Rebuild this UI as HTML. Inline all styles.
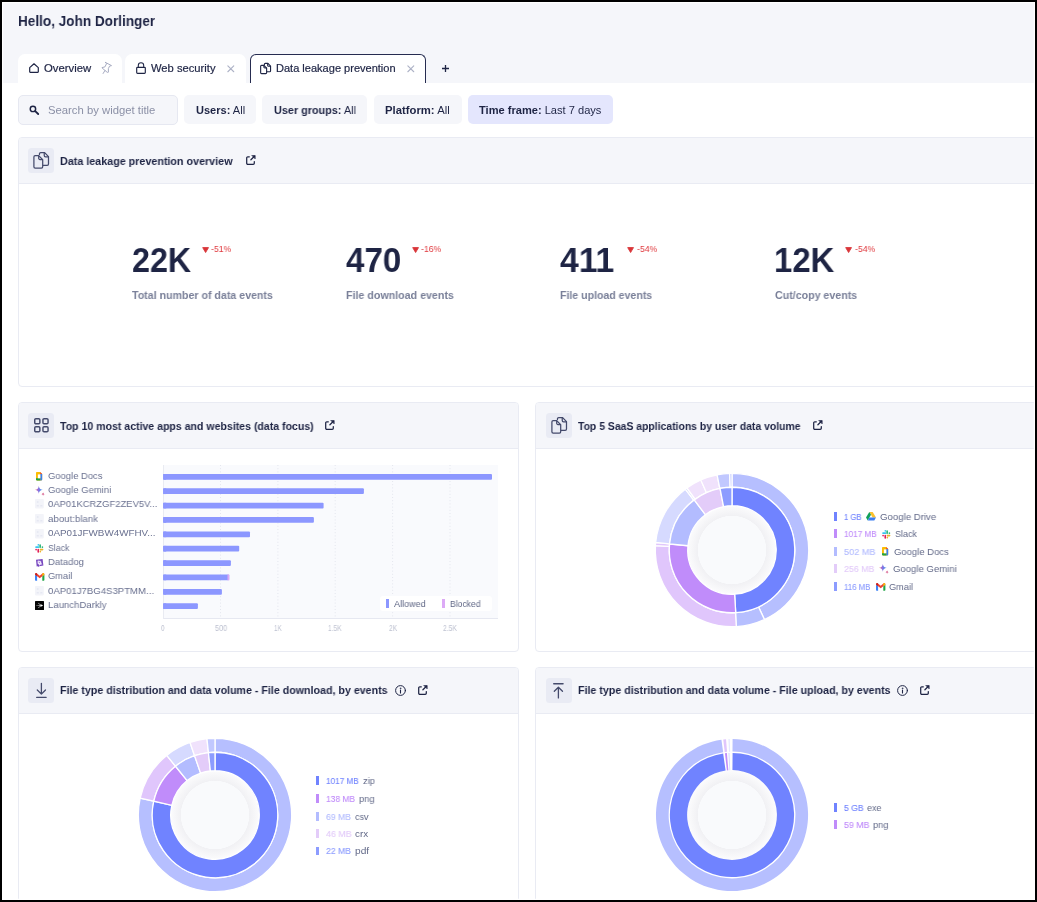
<!DOCTYPE html>
<html><head>
<meta charset="utf-8">
<title>Dashboard</title>
<style>
*{box-sizing:border-box;margin:0;padding:0}
html,body{width:1037px;height:902px;overflow:hidden;background:#fff}
body{font-family:"Liberation Sans",sans-serif;color:#1e2444;position:relative}
.abs{position:absolute}
.t{display:inline-block;will-change:transform;transform-origin:0 50%;white-space:nowrap}
svg{position:absolute;overflow:visible}
#frame{position:absolute;left:0;top:0;width:1037px;height:902px;border:2px solid #000;box-shadow:inset 0 0 0 1.2px #fff;z-index:50;pointer-events:none}
#topbg{left:0;top:0;width:1037px;height:83px;background:#f5f6fa}
#hello{left:18.4px;top:11.3px;font-size:15px;font-weight:bold;line-height:20px;color:#1e2444;white-space:nowrap}
.tab{top:54px;height:29px;background:#fff;border-radius:7px 7px 0 0;font-size:11px;line-height:29px;white-space:nowrap;color:#1e2444}
.tab span{position:absolute;top:0}
.tab .t{-webkit-text-stroke:0.2px #1e2444}
.tab svg{position:absolute}
#tab3{border:1px solid #262c50;border-bottom:none;border-radius:6px 6px 0 0}
.flt{top:95px;height:29px;background:#f5f6fa;border-radius:5px;font-size:11px;line-height:29px;white-space:nowrap;color:#1e2444;text-align:center}
.flt b{font-weight:bold}
.card{border:1px solid #e9ebf3;border-radius:4px;background:#fff;overflow:hidden}
.chead{position:absolute;left:0;top:0;right:0;height:46px;background:#f5f6fa;border-bottom:1px solid #e9ebf3}
.cico{position:absolute;left:9.2px;top:10px;width:25.8px;height:25.3px;border-radius:3.5px;background:#e9ebf4}
.ctitle{position:absolute;left:41px;top:14.4px;font-size:11px;font-weight:bold;line-height:18px;white-space:nowrap;color:#1e2444}
.big{font-size:34.4px;font-weight:bold;line-height:40px;color:#1e2444;white-space:nowrap}
.sub{font-size:11px;font-weight:bold;line-height:16px;color:#7a8099;white-space:nowrap}
.delta{font-size:9.5px;line-height:10px;color:#e0393e;white-space:nowrap}
.blab{font-size:9.8px;line-height:14px;color:#6a7190;white-space:nowrap}
.axl{font-size:8.4px;line-height:10px;color:#bec2d1;white-space:nowrap}
.leg{font-size:9.3px;line-height:12px;color:#5f6685;white-space:nowrap}
.lval{font-size:9.4px;line-height:14px;-webkit-text-stroke:0.12px;white-space:nowrap}
.lnam{font-size:9.8px;line-height:14px;color:#626988;white-space:nowrap}
</style>
</head>
<body>
<div id="topbg" class="abs"></div>
<div id="hello" class="abs"><span class="t" style="transform: scaleX(0.9045);">Hello, John Dorlinger</span></div>

<!-- tabs -->
<div class="abs tab" id="tab1" style="left:18px;width:104px"><span style="left:25.9px;top:-0.4px"><span class="t" style="transform: scaleX(1.0274);">Overview</span></span>
<svg style="left:10.7px;top:9.2px" width="10" height="10" viewBox="0 0 10 10" fill="none" stroke="#1e2444" stroke-width="1.2" stroke-linejoin="round"><path d="M0.7 4.6 L5 0.8 L9.3 4.6 V8.7 A0.6 0.6 0 0 1 8.7 9.3 H1.3 A0.6 0.6 0 0 1 0.7 8.7 Z"></path></svg>
<svg style="left:83px;top:8px" width="12" height="12" viewBox="0 0 12 12" fill="none" stroke="#a3a8bf" stroke-width="0.95" stroke-linejoin="round" stroke-linecap="round"><path d="M4.4 0.4 L10.5 3.6 L8.6 4.1 L7.4 6.5 V10.2 L6.3 10.4 L1.1 6 L1 5.6 L3.9 4.9 L5.4 2 Z M3.9 8.6 L2.1 11.5"></path></svg>
</div>
<div class="abs tab" id="tab2" style="left:125.3px;width:120.6px"><span style="left:25.7px;top:-0.4px"><span class="t" style="transform: scaleX(1.0178);">Web security</span></span>
<svg style="left:11.1px;top:8px" width="10" height="12" viewBox="0 0 10 12" fill="none" stroke="#1e2444" stroke-width="1.15" stroke-linejoin="round"><rect x="0.7" y="5.3" width="8.6" height="6" rx="0.8"></rect><path d="M2.3 5.3 V3.5 A2.7 2.7 0 0 1 7.7 3.5 V5.3" stroke-width="1.05"></path></svg>
<svg style="left:101.4px;top:10.8px" width="7.6" height="7.6" viewBox="0 0 9 9" fill="none" stroke="#adb2c6" stroke-width="1.3" stroke-linecap="round"><path d="M1 1 L8 8 M8 1 L1 8"></path></svg>
</div>
<div class="abs tab" id="tab3" style="left:250px;width:176px"><span style="left:25.2px;top:-1.4px"><span class="t" style="transform: scaleX(1.0029);">Data leakage prevention</span></span>
<svg style="left:9px;top:8.1px" width="11" height="11" viewBox="0 0 16.1 16.2" fill="none" stroke="#1e2444" stroke-width="1.65" stroke-linejoin="round" stroke-linecap="round"><path d="M6.45 2.4 V1.9 A1.3 1.3 0 0 1 7.75 0.6 H11.65 L15.5 4.5 V11.6 A1.3 1.3 0 0 1 14.2 12.9 H10.3"></path><path d="M11.25 0.8 V3.5 A1.3 1.3 0 0 0 12.55 4.8 H15.3"></path><path d="M0.9 4.8 A1.3 1.3 0 0 1 2.2 3.5 H5.7 L9.7 7.5 V14.3 A1.3 1.3 0 0 1 8.4 15.6 H2.2 A1.3 1.3 0 0 1 0.9 14.3 Z"></path><path d="M5.7 3.7 V6 A1.3 1.3 0 0 0 7 7.3 H9.5"></path></svg>
<svg style="left:155.5px;top:9.8px" width="7.6" height="7.6" viewBox="0 0 9 9" fill="none" stroke="#adb2c6" stroke-width="1.3" stroke-linecap="round"><path d="M1 1 L8 8 M8 1 L1 8"></path></svg>
</div>
<svg style="left:442px;top:65px" width="7" height="7" viewBox="0 0 7 7" fill="none" stroke="#1e2444" stroke-width="1.3"><path d="M3.5 0 V7 M0 3.5 H7"></path></svg>

<!-- filters -->
<div class="abs flt" id="search" style="left:18px;width:160px;height:30px;border:1px solid #e6e8f1;text-align:left;color:#8b90a6"><span style="position:absolute;left:28.6px;top:0px"><span class="t" style="transform: scaleX(1.0271);">Search by widget title</span></span>
<svg style="left:10.2px;top:9.1px" width="10" height="10" viewBox="0 0 10 10" fill="none" stroke="#1e2444" stroke-width="1.45" stroke-linecap="round"><circle cx="3.95" cy="3.9" r="2.7"></circle><path d="M6.2 6.1 L9.2 9" stroke-width="1.8"></path></svg></div>
<div class="abs flt" style="left:184.2px;width:71.8px;text-align:left"><span class="abs" style="left:11.6px;top:1px"><span class="t" style="transform: scaleX(1.0033);"><b>Users:</b> All</span></span></div>
<div class="abs flt" style="left:262px;width:104.6px;text-align:left"><span class="abs" style="left:11.9px;top:1px"><span class="t" style="transform: scaleX(0.9849);"><b>User groups:</b> All</span></span></div>
<div class="abs flt" style="left:374px;width:88px;text-align:left"><span class="abs" style="left:11.4px;top:1px"><span class="t" style="transform: scaleX(1.0275);"><b>Platform:</b> All</span></span></div>
<div class="abs flt" style="left:468px;width:145px;background:#e4e6fd;text-align:left"><span class="abs" style="left:11px;top:1px"><span class="t" style="transform: scaleX(1.0075);"><b>Time frame:</b> Last 7 days</span></span></div>


<!-- overview card -->
<div class="abs card" id="c1" style="left:18px;top:137px;width:1040px;height:250px">
<div class="chead"><div class="cico" style="left:9.2px"></div><svg style="left:14.1px;top:14.3px" width="16.1" height="16.7" viewBox="0 0 16.1 16.2" preserveAspectRatio="none" fill="none" stroke="#444a6b" stroke-width="1.25" stroke-linejoin="round" stroke-linecap="round"><path d="M6.45 2.4 V1.9 A1.3 1.3 0 0 1 7.75 0.6 H11.65 L15.5 4.5 V11.6 A1.3 1.3 0 0 1 14.2 12.9 H10.3"></path><path d="M11.25 0.8 V3.5 A1.3 1.3 0 0 0 12.55 4.8 H15.3"></path><path d="M0.9 4.8 A1.3 1.3 0 0 1 2.2 3.5 H5.7 L9.7 7.5 V14.3 A1.3 1.3 0 0 1 8.4 15.6 H2.2 A1.3 1.3 0 0 1 0.9 14.3 Z"></path><path d="M5.7 3.7 V6 A1.3 1.3 0 0 0 7 7.3 H9.5"></path></svg><div class="ctitle" style="left:41.3px;top:14.4px"><span class="t" style="transform: scaleX(0.9763);">Data leakage prevention overview</span></div><svg style="left:227.3px;top:17.3px" width="10" height="10" viewBox="0 0 10 10" fill="none" stroke="#1e2444" stroke-width="1.25" stroke-linecap="round" stroke-linejoin="round"><path d="M3.3 1.8 H1.8 A1.1 1.1 0 0 0 0.7 2.9 V8.2 A1.1 1.1 0 0 0 1.8 9.3 H7.2 A1.1 1.1 0 0 0 8.3 8.2 V6.5"></path><path d="M4.9 4.8 L8.2 1.5"></path><path d="M6.1 0.5 H9.2 V3.6 Z" fill="#1e2444" stroke-width="0.6"></path></svg></div>
<div class="abs big" style="left:112.9px;top:101.7px"><span class="t" style="transform: scaleX(0.9367);">22K</span></div>
  <div class="abs sub" style="left:112.9px;top:149.4px"><span class="t" style="transform: scaleX(0.9659);">Total number of data events</span></div>
  <svg style="left:182.6px;top:108.9px" width="7" height="6" viewBox="0 0 7 6"><path d="M0.7 0.6 H6.5 L3.6 5.5 Z" fill="#d93539" stroke="#d93539" stroke-width="0.9" stroke-linejoin="round"></path></svg><div class="abs delta" style="left:191.6px;top:105.9px"><span class="t" style="transform: scaleX(0.9104);">-51%</span></div>
<div class="abs big" style="left:327px;top:101.7px"><span class="t" style="transform: scaleX(0.9618);">470</span></div>
  <div class="abs sub" style="left:327px;top:149.4px"><span class="t" style="transform: scaleX(0.9699);">File download events</span></div>
  <svg style="left:393.2px;top:108.9px" width="7" height="6" viewBox="0 0 7 6"><path d="M0.7 0.6 H6.5 L3.6 5.5 Z" fill="#d93539" stroke="#d93539" stroke-width="0.9" stroke-linejoin="round"></path></svg><div class="abs delta" style="left:402.3px;top:105.9px"><span class="t" style="transform: scaleX(0.9104);">-16%</span></div>
<div class="abs big" style="left:541.4px;top:101.7px"><span class="t" style="transform: scaleX(0.9787);">411</span></div>
  <div class="abs sub" style="left:541.4px;top:149.4px"><span class="t" style="transform: scaleX(0.9607);">File upload events</span></div>
  <svg style="left:608.2px;top:108.9px" width="7" height="6" viewBox="0 0 7 6"><path d="M0.7 0.6 H6.5 L3.6 5.5 Z" fill="#d93539" stroke="#d93539" stroke-width="0.9" stroke-linejoin="round"></path></svg><div class="abs delta" style="left:617.7px;top:105.9px"><span class="t" style="transform: scaleX(0.9104);">-54%</span></div>
<div class="abs big" style="left:754.6px;top:101.7px"><span class="t" style="transform: scaleX(0.9557);">12K</span></div>
  <div class="abs sub" style="left:756.0px;top:149.4px"><span class="t" style="transform: scaleX(0.9674);">Cut/copy events</span></div>
  <svg style="left:826px;top:108.9px" width="7" height="6" viewBox="0 0 7 6"><path d="M0.7 0.6 H6.5 L3.6 5.5 Z" fill="#d93539" stroke="#d93539" stroke-width="0.9" stroke-linejoin="round"></path></svg><div class="abs delta" style="left:835.5px;top:105.9px"><span class="t" style="transform: scaleX(0.9104);">-54%</span></div>
</div>
<!-- card 2 -->
<div class="abs card" id="c2" style="left:18px;top:402px;width:501px;height:250px">
<div class="chead"><div class="cico" style="left:9.2px"></div><svg style="left:15.2px;top:15.3px" width="14.8" height="14.6" viewBox="0 0 14.8 14.6" fill="none" stroke="#444a6b" stroke-width="1.45" stroke-linejoin="round"><rect x="0.75" y="0.75" width="5.1" height="5.1" rx="1.1"></rect><rect x="8.95" y="0.75" width="5.1" height="5.1" rx="1.1"></rect><rect x="0.75" y="8.75" width="5.1" height="5.1" rx="1.1"></rect><rect x="8.95" y="8.75" width="5.1" height="5.1" rx="1.1"></rect></svg><div class="ctitle" style="left:41.3px;top:14.4px"><span class="t" style="transform: scaleX(0.9592);">Top 10 most active apps and websites (data focus)</span></div><svg style="left:306px;top:17.3px" width="10" height="10" viewBox="0 0 10 10" fill="none" stroke="#1e2444" stroke-width="1.25" stroke-linecap="round" stroke-linejoin="round"><path d="M3.3 1.8 H1.8 A1.1 1.1 0 0 0 0.7 2.9 V8.2 A1.1 1.1 0 0 0 1.8 9.3 H7.2 A1.1 1.1 0 0 0 8.3 8.2 V6.5"></path><path d="M4.9 4.8 L8.2 1.5"></path><path d="M6.1 0.5 H9.2 V3.6 Z" fill="#1e2444" stroke-width="0.6"></path></svg></div>
</div>
<div class="abs" style="left:162.5px;top:464.5px;width:335.4px;height:154px;background:#f9fafd;border-left:1px solid #e9ebf2;border-bottom:1px solid #e6e8f1"></div>
<svg style="left:0;top:0" width="520" height="640" viewBox="0 0 520 640"><line x1="220.5" y1="465" x2="220.5" y2="618" stroke="#e4e6ee" stroke-width="1" stroke-dasharray="1 2.2"></line><line x1="277.9" y1="465" x2="277.9" y2="618" stroke="#e4e6ee" stroke-width="1" stroke-dasharray="1 2.2"></line><line x1="335.2" y1="465" x2="335.2" y2="618" stroke="#e4e6ee" stroke-width="1" stroke-dasharray="1 2.2"></line><line x1="392.6" y1="465" x2="392.6" y2="618" stroke="#e4e6ee" stroke-width="1" stroke-dasharray="1 2.2"></line><line x1="450.0" y1="465" x2="450.0" y2="618" stroke="#e4e6ee" stroke-width="1" stroke-dasharray="1 2.2"></line><rect x="163.2" y="474.00" width="328.8" height="5.7" rx="1" fill="#8c97ff"></rect><rect x="163.2" y="474.00" width="3" height="5.7" fill="#8c97ff"></rect><rect x="163.2" y="488.37" width="200.7" height="5.7" rx="1" fill="#8c97ff"></rect><rect x="163.2" y="488.37" width="3" height="5.7" fill="#8c97ff"></rect><rect x="163.2" y="502.74" width="160.4" height="5.7" rx="1" fill="#8c97ff"></rect><rect x="163.2" y="502.74" width="3" height="5.7" fill="#8c97ff"></rect><rect x="163.2" y="517.11" width="150.7" height="5.7" rx="1" fill="#8c97ff"></rect><rect x="163.2" y="517.11" width="3" height="5.7" fill="#8c97ff"></rect><rect x="163.2" y="531.48" width="86.8" height="5.7" rx="1" fill="#8c97ff"></rect><rect x="163.2" y="531.48" width="3" height="5.7" fill="#8c97ff"></rect><rect x="163.2" y="545.85" width="76.0" height="5.7" rx="1" fill="#8c97ff"></rect><rect x="163.2" y="545.85" width="3" height="5.7" fill="#8c97ff"></rect><rect x="163.2" y="560.22" width="67.7" height="5.7" rx="1" fill="#8c97ff"></rect><rect x="163.2" y="560.22" width="3" height="5.7" fill="#8c97ff"></rect><rect x="163.2" y="574.59" width="66.0" height="5.7" rx="1" fill="#8c97ff"></rect><rect x="163.2" y="574.59" width="3" height="5.7" fill="#8c97ff"></rect><rect x="227.5" y="574.59" width="1.8" height="5.7" fill="#dca8f6"></rect><rect x="163.2" y="588.96" width="58.7" height="5.7" rx="1" fill="#8c97ff"></rect><rect x="163.2" y="588.96" width="3" height="5.7" fill="#8c97ff"></rect><rect x="163.2" y="603.33" width="34.7" height="5.7" rx="1" fill="#8c97ff"></rect><rect x="163.2" y="603.33" width="3" height="5.7" fill="#8c97ff"></rect></svg>
<div class="abs blab" style="left:47.6px;top:468.60px"><span class="t" style="transform: scaleX(0.9622);">Google Docs</span></div>
<svg style="left:36.1px;top:471.7px" width="6.2" height="8.4" viewBox="0 0 6.2 8.4"><path d="M0 0.8 A0.8 0.8 0 0 1 0.8 0 H4.2 L6.2 2 V7.6 A0.8 0.8 0 0 1 5.4 8.4 H0.8 A0.8 0.8 0 0 1 0 7.6 Z" fill="#fbbc04"></path><path d="M4.2 0 L6.2 2 H4.2 Z" fill="#ea4335"></path><path d="M4.3 2 H6.2 V7.6 A0.8 0.8 0 0 1 5.4 8.4 H4.3 Z" fill="#3c7ff0"></path><path d="M0 6.3 H4.3 V8.4 H0.8 A0.8 0.8 0 0 1 0 7.6 Z" fill="#1ea446"></path><rect x="1.9" y="2.4" width="2.4" height="3.9" fill="#fff"></rect></svg>
<div class="abs blab" style="left:47.6px;top:482.60px"><span class="t" style="transform: scaleX(0.967);">Google Gemini</span></div>
<svg style="left:34.5px;top:485.79999999999995px" width="10" height="10" viewBox="0 0 9.4 9.4"><defs><linearGradient id="gm35_485" x1="0" y1="0.5" x2="1" y2="0.5"><stop offset="0" stop-color="#f0705a"></stop><stop offset="0.35" stop-color="#a06ad8"></stop><stop offset="0.6" stop-color="#6b7de8"></stop><stop offset="1" stop-color="#2f8ff5"></stop></linearGradient></defs><path d="M3.6 0 C3.9 2.2 5 3.3 7.2 3.6 C5 3.9 3.9 5 3.6 7.2 C3.3 5 2.2 3.9 0 3.6 C2.2 3.3 3.3 2.2 3.6 0 Z" fill="url(#gm35_485)"></path><path d="M7.6 5.8 C7.75 6.9 8.3 7.45 9.4 7.6 C8.3 7.75 7.75 8.3 7.6 9.4 C7.45 8.3 6.9 7.75 5.8 7.6 C6.9 7.45 7.45 6.9 7.6 5.8 Z" fill="#d65a8a"></path></svg>
<div class="abs blab" style="left:47.6px;top:496.60px"><span class="t" style="transform: scaleX(0.9643);">0AP01KCRZGF2ZEV5V...</span></div>
<svg style="left:35.1px;top:499.3px" width="8.8" height="9.4" viewBox="0 0 8.8 9.4"><rect width="8.8" height="9.4" rx="0.8" fill="#f3f4f9"></rect><rect x="1.9" y="2.3" width="1.6" height="1.4" fill="#e3e6f1"></rect><rect x="1.7" y="6.2" width="2.1" height="1.2" fill="#e3e6f1"></rect><rect x="5.3" y="6.2" width="2.1" height="1.2" fill="#e3e6f1"></rect></svg>
<div class="abs blab" style="left:47.6px;top:511.60px"><span class="t" style="transform: scaleX(0.9887);">about:blank</span></div>
<svg style="left:35.1px;top:514.3px" width="8.8" height="9.4" viewBox="0 0 8.8 9.4"><rect width="8.8" height="9.4" rx="0.8" fill="#f3f4f9"></rect><rect x="1.9" y="2.3" width="1.6" height="1.4" fill="#e3e6f1"></rect><rect x="1.7" y="6.2" width="2.1" height="1.2" fill="#e3e6f1"></rect><rect x="5.3" y="6.2" width="2.1" height="1.2" fill="#e3e6f1"></rect></svg>
<div class="abs blab" style="left:47.6px;top:525.60px"><span class="t" style="transform: scaleX(1.0057);">0AP01JFWBW4WFHV...</span></div>
<svg style="left:35.1px;top:528.6px" width="8.8" height="9.4" viewBox="0 0 8.8 9.4"><rect width="8.8" height="9.4" rx="0.8" fill="#f3f4f9"></rect><rect x="1.9" y="2.3" width="1.6" height="1.4" fill="#e3e6f1"></rect><rect x="1.7" y="6.2" width="2.1" height="1.2" fill="#e3e6f1"></rect><rect x="5.3" y="6.2" width="2.1" height="1.2" fill="#e3e6f1"></rect></svg>
<div class="abs blab" style="left:47.6px;top:540.60px"><span class="t" style="transform: scaleX(0.8928);">Slack</span></div>
<svg style="left:35.2px;top:543.8px" width="8.6" height="9" viewBox="0 0 8.6 9" stroke-linecap="round" stroke-width="1.65" fill="none"><path d="M1 3.15 H3.5 M3.35 0.85 V0.95" stroke="#36c5f0"></path><path d="M5.15 0.95 V3.3 M7.4 3.1 V3.3" stroke="#2eb67d"></path><path d="M5.4 5.6 H7.6 M5.35 7.7 V7.8" stroke="#ecb22e"></path><path d="M3.25 5.7 V8 M1.1 5.55 V5.65" stroke="#e01e5a"></path></svg>
<div class="abs blab" style="left:47.6px;top:554.60px"><span class="t" style="transform: scaleX(0.9717);">Datadog</span></div>
<svg style="left:35.7px;top:558.6px" width="7.4" height="8" viewBox="0 0 7.4 8"><path d="M0 0.7 L6.6 0 L7.4 6.6 L3.2 7.2 L2.2 8 L2 7.3 L0.7 7.4 Z" fill="#7747bf"></path><path d="M1.6 1.8 L3.2 1.4 L4.2 2.4 L5 1.6 L5.4 4.2 L6.4 5.2 L4.4 5.8 L3.4 6.8 L2.8 5.4 L1.6 4.4 Z" fill="#efe6fa"></path><path d="M2.6 2.8 L3.8 3.2 L3.2 4.2 Z" fill="#7747bf"></path></svg>
<div class="abs blab" style="left:47.6px;top:568.60px"><span class="t" style="transform: scaleX(0.9495);">Gmail</span></div>
<svg style="left:34.800000000000004px;top:573.0999999999999px" width="9.4" height="7.7" viewBox="0 0 9.4 7.2" preserveAspectRatio="none"><path d="M0 1.4 L2.1 3 V7.2 H0.7 A0.7 0.7 0 0 1 0 6.5 Z" fill="#3b82f6"></path><path d="M9.4 1.4 L7.3 3 V7.2 H8.7 A0.7 0.7 0 0 0 9.4 6.5 Z" fill="#22a548"></path><path d="M0 1.4 V1.1 A1.05 1.05 0 0 1 1.7 0.3 L4.7 2.6 L7.7 0.3 A1.05 1.05 0 0 1 9.4 1.1 V1.4 L7.3 3 L4.7 5 L2.1 3 Z" fill="#ea4335"></path><path d="M0 1.4 V1.1 A1.05 1.05 0 0 1 1.7 0.3 L2.1 0.6 V3 Z" fill="#c5221f"></path><path d="M9.4 1.4 V1.1 A1.05 1.05 0 0 0 7.7 0.3 L7.3 0.6 V3 Z" fill="#fbbc04"></path></svg>
<div class="abs blab" style="left:47.6px;top:583.60px"><span class="t" style="transform: scaleX(0.9782);">0AP01J7BG4S3PTMM...</span></div>
<svg style="left:35.1px;top:585.8px" width="8.8" height="9.4" viewBox="0 0 8.8 9.4"><rect width="8.8" height="9.4" rx="0.8" fill="#f3f4f9"></rect><rect x="1.9" y="2.3" width="1.6" height="1.4" fill="#e3e6f1"></rect><rect x="1.7" y="6.2" width="2.1" height="1.2" fill="#e3e6f1"></rect><rect x="5.3" y="6.2" width="2.1" height="1.2" fill="#e3e6f1"></rect></svg>
<div class="abs blab" style="left:47.6px;top:597.60px"><span class="t" style="transform: scaleX(0.9765);">LaunchDarkly</span></div>
<svg style="left:34.9px;top:600.9px" width="9" height="9" viewBox="0 0 9 9"><defs><linearGradient id="ld35_600" x1="0" y1="0" x2="1" y2="0"><stop offset="0" stop-color="#fff" stop-opacity="0.25"></stop><stop offset="1" stop-color="#fff"></stop></linearGradient></defs><rect width="9" height="9" rx="0.5" fill="#050505"></rect><path d="M5.8 3.2 L8.1 4.5 L5.8 5.8 Z" fill="#fff"></path><rect x="0.9" y="4.15" width="5.4" height="0.7" fill="url(#ld35_600)"></rect><path d="M3 2.2 L4.6 3 M3 6.8 L4.6 6" stroke="#fff" stroke-opacity="0.6" stroke-width="0.7" fill="none"></path><path d="M4.4 3.2 L5.9 3.9 M4.4 5.8 L5.9 5.1" stroke="#fff" stroke-opacity="0.85" stroke-width="0.7" fill="none"></path></svg>
<div class="abs axl" style="left:161.4px;top:622.6px"><span class="t" style="transform: scaleX(0.7706);">0</span></div>
<div class="abs axl" style="left:214.5px;top:622.6px"><span class="t" style="transform: scaleX(0.8724);">500</span></div>
<div class="abs axl" style="left:274.1px;top:622.6px"><span class="t" style="transform: scaleX(0.7415);">1K</span></div>
<div class="abs axl" style="left:328.4px;top:622.6px"><span class="t" style="transform: scaleX(0.7833);">1.5K</span></div>
<div class="abs axl" style="left:388.5px;top:622.6px"><span class="t" style="transform: scaleX(0.8);">2K</span></div>
<div class="abs axl" style="left:443.1px;top:622.6px"><span class="t" style="transform: scaleX(0.8007);">2.5K</span></div>
<div class="abs" style="left:380px;top:595.5px;width:112px;height:15.5px;background:#fff;border-radius:3px"></div>
<div class="abs" style="left:386px;top:599px;width:3px;height:9px;background:#8c97ff"></div>
<div class="abs leg" style="left:393.7px;top:598px"><span class="t" style="transform: scaleX(0.9704);">Allowed</span></div>
<div class="abs" style="left:442px;top:599px;width:3px;height:9px;background:#dcaaf6"></div>
<div class="abs leg" style="left:450px;top:598px"><span class="t" style="transform: scaleX(0.9221);">Blocked</span></div>
<!-- card 3 -->
<div class="abs card" id="c3" style="left:535px;top:402px;width:520px;height:250px">
<div class="chead"><div class="cico" style="left:10.299999999999999px"></div><svg style="left:15.2px;top:14.3px" width="16.1" height="16.7" viewBox="0 0 16.1 16.2" preserveAspectRatio="none" fill="none" stroke="#444a6b" stroke-width="1.25" stroke-linejoin="round" stroke-linecap="round"><path d="M6.45 2.4 V1.9 A1.3 1.3 0 0 1 7.75 0.6 H11.65 L15.5 4.5 V11.6 A1.3 1.3 0 0 1 14.2 12.9 H10.3"></path><path d="M11.25 0.8 V3.5 A1.3 1.3 0 0 0 12.55 4.8 H15.3"></path><path d="M0.9 4.8 A1.3 1.3 0 0 1 2.2 3.5 H5.7 L9.7 7.5 V14.3 A1.3 1.3 0 0 1 8.4 15.6 H2.2 A1.3 1.3 0 0 1 0.9 14.3 Z"></path><path d="M5.7 3.7 V6 A1.3 1.3 0 0 0 7 7.3 H9.5"></path></svg><div class="ctitle" style="left:42.4px;top:14.4px"><span class="t" style="transform: scaleX(0.9462);">Top 5 SaaS applications by user data volume</span></div><svg style="left:277px;top:17.3px" width="10" height="10" viewBox="0 0 10 10" fill="none" stroke="#1e2444" stroke-width="1.25" stroke-linecap="round" stroke-linejoin="round"><path d="M3.3 1.8 H1.8 A1.1 1.1 0 0 0 0.7 2.9 V8.2 A1.1 1.1 0 0 0 1.8 9.3 H7.2 A1.1 1.1 0 0 0 8.3 8.2 V6.5"></path><path d="M4.9 4.8 L8.2 1.5"></path><path d="M6.1 0.5 H9.2 V3.6 Z" fill="#1e2444" stroke-width="0.6"></path></svg></div>
</div>
<div class="abs" style="left:631.5px;top:449.79999999999995px;width:200px;height:200px"><svg style="left:0;top:0" width="200" height="200" viewBox="0 0 200 200">
<defs><radialGradient id="g1" cx="50%" cy="50%" r="50%"><stop offset="0" stop-color="#f9fafc"></stop><stop offset="0.755" stop-color="#f9fafc"></stop><stop offset="0.765" stop-color="#f1f1f4"></stop><stop offset="1" stop-color="#fcfcfd"></stop></radialGradient></defs>
<circle cx="100" cy="100" r="45" fill="url(#g1)"></circle>
<g stroke="#fff" stroke-width="1.3" stroke-linejoin="miter">
<path d="M100.00 23.30 A76.7 76.7 0 0 1 132.41 169.51 L126.52 156.87 A62.75 62.75 0 0 0 100.00 37.25 Z" fill="#b6bfff"></path>
<path d="M132.41 169.51 A76.7 76.7 0 0 1 104.28 176.58 L103.50 162.65 A62.75 62.75 0 0 0 126.52 156.87 Z" fill="#b6bfff"></path>
<path d="M104.28 176.58 A76.7 76.7 0 0 1 23.43 95.58 L37.35 96.39 A62.75 62.75 0 0 0 103.50 162.65 Z" fill="#e0c6fc"></path>
<path d="M23.43 95.58 A76.7 76.7 0 0 1 23.67 92.52 L37.55 93.88 A62.75 62.75 0 0 0 37.35 96.39 Z" fill="#e0c6fc"></path>
<path d="M23.67 92.52 A76.7 76.7 0 0 1 53.31 39.15 L61.80 50.22 A62.75 62.75 0 0 0 37.55 93.88 Z" fill="#d6daff"></path>
<path d="M53.31 39.15 A76.7 76.7 0 0 1 54.92 37.95 L63.12 49.23 A62.75 62.75 0 0 0 61.80 50.22 Z" fill="#d6daff"></path>
<path d="M54.92 37.95 A76.7 76.7 0 0 1 68.80 29.93 L74.48 42.68 A62.75 62.75 0 0 0 63.12 49.23 Z" fill="#f0e2fc"></path>
<path d="M68.80 29.93 A76.7 76.7 0 0 1 85.10 24.76 L87.81 38.45 A62.75 62.75 0 0 0 74.48 42.68 Z" fill="#f0e2fc"></path>
<path d="M85.10 24.76 A76.7 76.7 0 0 1 97.72 23.33 L98.14 37.28 A62.75 62.75 0 0 0 87.81 38.45 Z" fill="#c1c8ff"></path>
<path d="M97.72 23.33 A76.7 76.7 0 0 1 100.00 23.30 L100.00 37.25 A62.75 62.75 0 0 0 98.14 37.28 Z" fill="#c1c8ff"></path>
<path d="M100.00 37.25 A62.75 62.75 0 0 1 103.72 162.64 L102.62 144.17 A44.25 44.25 0 0 0 100.00 55.75 Z" fill="#7083ff"></path>
<path d="M103.72 162.64 A62.75 62.75 0 0 1 37.54 93.99 L55.95 95.76 A44.25 44.25 0 0 0 102.62 144.17 Z" fill="#c08cfa"></path>
<path d="M37.54 93.99 A62.75 62.75 0 0 1 62.24 49.89 L73.37 64.66 A44.25 44.25 0 0 0 55.95 95.76 Z" fill="#b3bcff"></path>
<path d="M62.24 49.89 A62.75 62.75 0 0 1 88.03 38.40 L91.56 56.56 A44.25 44.25 0 0 0 73.37 64.66 Z" fill="#e3ccf9"></path>
<path d="M88.03 38.40 A62.75 62.75 0 0 1 100.00 37.25 L100.00 55.75 A44.25 44.25 0 0 0 91.56 56.56 Z" fill="#8c9cff"></path>
</g></svg></div>
<div class="abs" style="left:834px;top:511.9px;width:3.1px;height:8.9px;background:#7083ff"></div><div class="abs lval" style="left:844.4px;top:509.6px;color:#7083ff"><span class="t" style="transform: scaleX(0.8234);">1 GB</span></div><div class="abs lnam" style="left:879.9px;top:509.6px"><span class="t" style="transform: scaleX(0.9845);">Google Drive</span></div><svg style="left:866.3px;top:511.69999999999993px" width="10" height="8.4" viewBox="0 0 10 8.4"><path d="M3.3 0 H6.7 L10 5.6 H6.6 Z" fill="#fbc12d"></path><path d="M3.3 0 L0 5.6 L1.7 8.4 L5 2.8 Z" fill="#11a05a"></path><path d="M3.4 5.6 H10 L8.3 8.4 H1.7 Z" fill="#3b7ef2"></path></svg>
<div class="abs" style="left:834px;top:529.1px;width:3.1px;height:8.9px;background:#c08cfa"></div><div class="abs lval" style="left:844.4px;top:526.6px;color:#c08cfa"><span class="t" style="transform: scaleX(0.8713);">1017 MB</span></div><div class="abs lnam" style="left:894.6px;top:526.6px"><span class="t" style="transform: scaleX(0.9179);">Slack</span></div><svg style="left:881.8000000000001px;top:529.9px" width="8.6" height="9" viewBox="0 0 8.6 9" stroke-linecap="round" stroke-width="1.65" fill="none"><path d="M1 3.15 H3.5 M3.35 0.85 V0.95" stroke="#36c5f0"></path><path d="M5.15 0.95 V3.3 M7.4 3.1 V3.3" stroke="#2eb67d"></path><path d="M5.4 5.6 H7.6 M5.35 7.7 V7.8" stroke="#ecb22e"></path><path d="M3.25 5.7 V8 M1.1 5.55 V5.65" stroke="#e01e5a"></path></svg>
<div class="abs" style="left:834px;top:547.0px;width:3.1px;height:8.9px;background:#b3bcff"></div><div class="abs lval" style="left:844.4px;top:544.6px;color:#b3bcff"><span class="t" style="transform: scaleX(0.9749);">502 MB</span></div><div class="abs lnam" style="left:893.8px;top:544.6px"><span class="t" style="transform: scaleX(0.9675);">Google Docs</span></div><svg style="left:881.6px;top:547.3999999999999px" width="6.2" height="8.4" viewBox="0 0 6.2 8.4"><path d="M0 0.8 A0.8 0.8 0 0 1 0.8 0 H4.2 L6.2 2 V7.6 A0.8 0.8 0 0 1 5.4 8.4 H0.8 A0.8 0.8 0 0 1 0 7.6 Z" fill="#fbbc04"></path><path d="M4.2 0 L6.2 2 H4.2 Z" fill="#ea4335"></path><path d="M4.3 2 H6.2 V7.6 A0.8 0.8 0 0 1 5.4 8.4 H4.3 Z" fill="#3c7ff0"></path><path d="M0 6.3 H4.3 V8.4 H0.8 A0.8 0.8 0 0 1 0 7.6 Z" fill="#1ea446"></path><rect x="1.9" y="2.4" width="2.4" height="3.9" fill="#fff"></rect></svg>
<div class="abs" style="left:834px;top:563.9px;width:3.1px;height:8.9px;background:#e3ccf9"></div><div class="abs lval" style="left:844.4px;top:561.6px;color:#e3ccf9"><span class="t" style="transform: scaleX(0.9408);">256 MB</span></div><div class="abs lnam" style="left:892.6999999999999px;top:561.6px"><span class="t" style="transform: scaleX(0.9746);">Google Gemini</span></div><svg style="left:879.1999999999999px;top:563.8999999999999px" width="10" height="10" viewBox="0 0 9.4 9.4"><defs><linearGradient id="gm879_563" x1="0" y1="0.5" x2="1" y2="0.5"><stop offset="0" stop-color="#f0705a"></stop><stop offset="0.35" stop-color="#a06ad8"></stop><stop offset="0.6" stop-color="#6b7de8"></stop><stop offset="1" stop-color="#2f8ff5"></stop></linearGradient></defs><path d="M3.6 0 C3.9 2.2 5 3.3 7.2 3.6 C5 3.9 3.9 5 3.6 7.2 C3.3 5 2.2 3.9 0 3.6 C2.2 3.3 3.3 2.2 3.6 0 Z" fill="url(#gm879_563)"></path><path d="M7.6 5.8 C7.75 6.9 8.3 7.45 9.4 7.6 C8.3 7.75 7.75 8.3 7.6 9.4 C7.45 8.3 6.9 7.75 5.8 7.6 C6.9 7.45 7.45 6.9 7.6 5.8 Z" fill="#d65a8a"></path></svg>
<div class="abs" style="left:834px;top:581.9px;width:3.1px;height:8.9px;background:#8c9cff"></div><div class="abs lval" style="left:844.4px;top:579.6px;color:#8c9cff"><span class="t" style="transform: scaleX(0.8379);">116 MB</span></div><div class="abs lnam" style="left:888.8px;top:579.6px"><span class="t" style="transform: scaleX(0.9377);">Gmail</span></div><svg style="left:875.7px;top:582.9999999999999px" width="9.4" height="7.7" viewBox="0 0 9.4 7.2" preserveAspectRatio="none"><path d="M0 1.4 L2.1 3 V7.2 H0.7 A0.7 0.7 0 0 1 0 6.5 Z" fill="#3b82f6"></path><path d="M9.4 1.4 L7.3 3 V7.2 H8.7 A0.7 0.7 0 0 0 9.4 6.5 Z" fill="#22a548"></path><path d="M0 1.4 V1.1 A1.05 1.05 0 0 1 1.7 0.3 L4.7 2.6 L7.7 0.3 A1.05 1.05 0 0 1 9.4 1.1 V1.4 L7.3 3 L4.7 5 L2.1 3 Z" fill="#ea4335"></path><path d="M0 1.4 V1.1 A1.05 1.05 0 0 1 1.7 0.3 L2.1 0.6 V3 Z" fill="#c5221f"></path><path d="M9.4 1.4 V1.1 A1.05 1.05 0 0 0 7.7 0.3 L7.3 0.6 V3 Z" fill="#fbbc04"></path></svg>
<!-- card 4 -->
<div class="abs card" id="c4" style="left:18px;top:667px;width:501px;height:260px">
<div class="chead"><div class="cico" style="left:9.2px"></div><svg style="left:17.2px;top:14.3px" width="10.8" height="16.2" viewBox="0 0 10.8 16.2" fill="none" stroke="#444a6b" stroke-width="1.3" stroke-linecap="round" stroke-linejoin="round"><path d="M5.4 1.3 V12 M1.3 8 L5.4 12.1 L9.5 8 M0.7 15.45 H10.1"></path></svg><div class="ctitle" style="left:41.3px;top:13.0px"><span class="t" style="transform: scaleX(0.9692);">File type distribution and data volume - File download, by events</span></div><svg style="left:376px;top:16.9px" width="11" height="11" viewBox="0 0 11 11" fill="none" stroke="#1e2444" stroke-width="1" stroke-linecap="round"><circle cx="5.5" cy="5.5" r="4.9"></circle><path d="M5.5 5.1 V7.9" stroke-width="1.1"></path><circle cx="5.5" cy="3.3" r="0.45" fill="#1e2444" stroke-width="0.5"></circle></svg><svg style="left:399px;top:17.2px" width="10" height="10" viewBox="0 0 10 10" fill="none" stroke="#1e2444" stroke-width="1.25" stroke-linecap="round" stroke-linejoin="round"><path d="M3.3 1.8 H1.8 A1.1 1.1 0 0 0 0.7 2.9 V8.2 A1.1 1.1 0 0 0 1.8 9.3 H7.2 A1.1 1.1 0 0 0 8.3 8.2 V6.5"></path><path d="M4.9 4.8 L8.2 1.5"></path><path d="M6.1 0.5 H9.2 V3.6 Z" fill="#1e2444" stroke-width="0.6"></path></svg></div>
</div>
<div class="abs" style="left:114.80000000000001px;top:714.8px;width:200px;height:200px"><svg style="left:0;top:0" width="200" height="200" viewBox="0 0 200 200">
<defs><radialGradient id="g2" cx="50%" cy="50%" r="50%"><stop offset="0" stop-color="#f9fafc"></stop><stop offset="0.755" stop-color="#f9fafc"></stop><stop offset="0.765" stop-color="#f1f1f4"></stop><stop offset="1" stop-color="#fcfcfd"></stop></radialGradient></defs>
<circle cx="100" cy="100" r="45" fill="url(#g2)"></circle>
<g stroke="#fff" stroke-width="1.3" stroke-linejoin="miter">
<path d="M100.00 23.30 A76.7 76.7 0 1 1 25.18 83.14 L38.79 86.20 A62.75 62.75 0 1 0 100.00 37.25 Z" fill="#b6bfff"></path>
<path d="M25.18 83.14 A76.7 76.7 0 0 1 51.73 40.39 L60.51 51.23 A62.75 62.75 0 0 0 38.79 86.20 Z" fill="#e0c6fc"></path>
<path d="M51.73 40.39 A76.7 76.7 0 0 1 75.03 27.48 L79.57 40.67 A62.75 62.75 0 0 0 60.51 51.23 Z" fill="#d6daff"></path>
<path d="M75.03 27.48 A76.7 76.7 0 0 1 91.98 23.72 L93.44 37.59 A62.75 62.75 0 0 0 79.57 40.67 Z" fill="#f0e2fc"></path>
<path d="M91.98 23.72 A76.7 76.7 0 0 1 100.00 23.30 L100.00 37.25 A62.75 62.75 0 0 0 93.44 37.59 Z" fill="#c1c8ff"></path>
<path d="M100.00 37.25 A62.75 62.75 0 1 1 38.79 86.20 L56.83 90.27 A44.25 44.25 0 1 0 100.00 55.75 Z" fill="#7083ff"></path>
<path d="M38.79 86.20 A62.75 62.75 0 0 1 60.51 51.23 L72.15 65.61 A44.25 44.25 0 0 0 56.83 90.27 Z" fill="#c08cfa"></path>
<path d="M60.51 51.23 A62.75 62.75 0 0 1 79.57 40.67 L85.59 58.16 A44.25 44.25 0 0 0 72.15 65.61 Z" fill="#b3bcff"></path>
<path d="M79.57 40.67 A62.75 62.75 0 0 1 93.44 37.59 L95.37 55.99 A44.25 44.25 0 0 0 85.59 58.16 Z" fill="#e3ccf9"></path>
<path d="M93.44 37.59 A62.75 62.75 0 0 1 100.00 37.25 L100.00 55.75 A44.25 44.25 0 0 0 95.37 55.99 Z" fill="#8c9cff"></path>
</g></svg></div>
<div class="abs" style="left:316px;top:775.9px;width:3.1px;height:8.9px;background:#7083ff"></div><div class="abs lval" style="left:326.4px;top:773.6px;color:#7083ff"><span class="t" style="transform: scaleX(0.8713);">1017 MB</span></div><div class="abs lnam" style="left:362.59999999999997px;top:773.6px"><span class="t" style="transform: scaleX(0.9496);">zip</span></div>
<div class="abs" style="left:316px;top:793.7px;width:3.1px;height:8.9px;background:#c08cfa"></div><div class="abs lval" style="left:326.4px;top:791.6px;color:#c08cfa"><span class="t" style="transform: scaleX(0.8975);">138 MB</span></div><div class="abs lnam" style="left:359.29999999999995px;top:791.6px"><span class="t" style="transform: scaleX(0.9475);">png</span></div>
<div class="abs" style="left:316px;top:811.8px;width:3.1px;height:8.9px;background:#b3bcff"></div><div class="abs lval" style="left:326.4px;top:809.6px;color:#b3bcff"><span class="t" style="transform: scaleX(0.9222);">69 MB</span></div><div class="abs lnam" style="left:355.2px;top:809.6px"><span class="t" style="transform: scaleX(0.9182);">csv</span></div>
<div class="abs" style="left:316px;top:828.9px;width:3.1px;height:8.9px;background:#e3ccf9"></div><div class="abs lval" style="left:326.4px;top:826.6px;color:#e3ccf9"><span class="t" style="transform: scaleX(0.948);">46 MB</span></div><div class="abs lnam" style="left:355.4px;top:826.6px"><span class="t" style="transform: scaleX(0.9952);">crx</span></div>
<div class="abs" style="left:316px;top:846.6px;width:3.1px;height:8.9px;background:#8c9cff"></div><div class="abs lval" style="left:326.4px;top:843.6px;color:#8c9cff"><span class="t" style="transform: scaleX(0.9222);">22 MB</span></div><div class="abs lnam" style="left:355.2px;top:843.6px"><span class="t" style="transform: scaleX(1.0349);">pdf</span></div>
<!-- card 5 -->
<div class="abs card" id="c5" style="left:535px;top:667px;width:520px;height:260px">
<div class="chead"><div class="cico" style="left:10.1px"></div><svg style="left:17.2px;top:14.6px" width="10.8" height="16.2" viewBox="0 0 10.8 16.2" fill="none" stroke="#444a6b" stroke-width="1.3" stroke-linecap="round" stroke-linejoin="round"><path d="M5.4 14.9 V4.2 M1.3 8.3 L5.4 4.2 L9.5 8.3 M0.7 0.75 H10.1"></path></svg><div class="ctitle" style="left:42.199999999999996px;top:13.0px"><span class="t" style="transform: scaleX(0.9686);">File type distribution and data volume - File upload, by events</span></div><svg style="left:361px;top:16.9px" width="11" height="11" viewBox="0 0 11 11" fill="none" stroke="#1e2444" stroke-width="1" stroke-linecap="round"><circle cx="5.5" cy="5.5" r="4.9"></circle><path d="M5.5 5.1 V7.9" stroke-width="1.1"></path><circle cx="5.5" cy="3.3" r="0.45" fill="#1e2444" stroke-width="0.5"></circle></svg><svg style="left:383.5px;top:17.2px" width="10" height="10" viewBox="0 0 10 10" fill="none" stroke="#1e2444" stroke-width="1.25" stroke-linecap="round" stroke-linejoin="round"><path d="M3.3 1.8 H1.8 A1.1 1.1 0 0 0 0.7 2.9 V8.2 A1.1 1.1 0 0 0 1.8 9.3 H7.2 A1.1 1.1 0 0 0 8.3 8.2 V6.5"></path><path d="M4.9 4.8 L8.2 1.5"></path><path d="M6.1 0.5 H9.2 V3.6 Z" fill="#1e2444" stroke-width="0.6"></path></svg></div>
</div>
<div class="abs" style="left:631.8px;top:714.8px;width:200px;height:200px"><svg style="left:0;top:0" width="200" height="200" viewBox="0 0 200 200">
<defs><radialGradient id="g3" cx="50%" cy="50%" r="50%"><stop offset="0" stop-color="#f9fafc"></stop><stop offset="0.755" stop-color="#f9fafc"></stop><stop offset="0.765" stop-color="#f1f1f4"></stop><stop offset="1" stop-color="#fcfcfd"></stop></radialGradient></defs>
<circle cx="100" cy="100" r="45" fill="url(#g3)"></circle>
<path d="M100.60 23.95 A76.05 76.05 0 1 1 89.42 24.69 L91.18 37.22 A63.4 63.4 0 1 0 100.50 36.60 Z" fill="#b6bfff"></path>
<path d="M91.26 24.45 A76.05 76.05 0 0 1 94.03 24.18 L95.03 36.80 A63.4 63.4 0 0 0 92.71 37.02 Z" fill="#e0c6fc"></path>
<path d="M96.42 24.03 A76.05 76.05 0 0 1 97.74 23.98 L98.12 36.63 A63.4 63.4 0 0 0 97.01 36.67 Z" fill="#e6e9ff"></path>
<path d="M100.60 37.90 A62.1 62.1 0 1 1 91.14 38.53 L93.60 55.56 A44.9 44.9 0 1 0 100.43 55.10 Z" fill="#7083ff"></path>
<path d="M92.97 38.30 A62.1 62.1 0 0 1 94.91 38.11 L96.32 55.25 A44.9 44.9 0 0 0 94.92 55.39 Z" fill="#c08cfa"></path>
<path d="M96.43 38.00 A62.1 62.1 0 0 1 97.51 37.95 L98.20 55.14 A44.9 44.9 0 0 0 97.42 55.17 Z" fill="#d5daff"></path>
</svg></div>
<div class="abs" style="left:834px;top:802.9px;width:3.1px;height:8.9px;background:#7083ff"></div><div class="abs lval" style="left:844.4px;top:800.6px;color:#7083ff"><span class="t" style="transform: scaleX(0.9216);">5 GB</span></div><div class="abs lnam" style="left:867.1999999999999px;top:800.6px"><span class="t" style="transform: scaleX(0.9179);">exe</span></div>
<div class="abs" style="left:834px;top:819.9px;width:3.1px;height:8.9px;background:#c08cfa"></div><div class="abs lval" style="left:844.4px;top:817.6px;color:#c08cfa"><span class="t" style="transform: scaleX(0.9406);">59 MB</span></div><div class="abs lnam" style="left:873.0px;top:817.6px"><span class="t" style="transform: scaleX(0.9414);">png</span></div>

<div id="frame"></div>


</body></html>
